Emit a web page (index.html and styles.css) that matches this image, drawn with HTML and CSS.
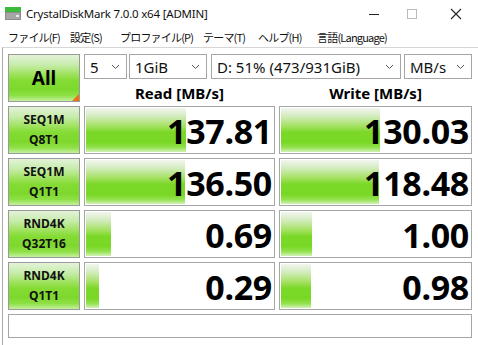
FILE: index.html
```html
<!DOCTYPE html>
<html lang="ja">
<head>
<meta charset="utf-8">
<title>CrystalDiskMark</title>
<link rel="stylesheet" href="styles.css">
</head>
<body>
<div class="titlebar">
  <svg class="appicon" width="16" height="14" viewBox="0 0 16 14">
    <rect x="0" y="0" width="16" height="5" fill="#3cba3c"/>
    <rect x="0" y="5" width="16" height="8" fill="#8c8c8c"/>
    <rect x="1" y="6" width="14" height="6" fill="#a6a6a6"/>
    <rect x="11" y="8" width="3" height="2" fill="#e8e8e8"/>
  </svg>
  <span class="title">CrystalDiskMark 7.0.0 x64 [ADMIN]</span>
  <div class="controls">
    <svg class="ctl" width="12" height="12" viewBox="0 0 12 12"><line x1="1" y1="6.5" x2="11" y2="6.5" stroke="#222" stroke-width="1"/></svg>
    <svg class="ctl" width="12" height="12" viewBox="0 0 12 12"><rect x="1.5" y="1.5" width="9" height="9" fill="none" stroke="#bbb" stroke-width="1"/></svg>
    <svg class="ctl" width="12" height="12" viewBox="0 0 12 12"><path d="M1 1 L11 11 M11 1 L1 11" stroke="#222" stroke-width="1.1"/></svg>
  </div>
</div>
<div class="menubar">
  <span class="mi m1">ファイル(F)</span>
  <span class="mi m2">設定(S)</span>
  <span class="mi m3">プロファイル(P)</span>
  <span class="mi m4">テーマ(T)</span>
  <span class="mi m5">ヘルプ(H)</span>
  <span class="mi m6">言語(Language)</span>
</div>
<div class="main">
  <div class="grid">
    <div class="btn all">All<span class="corner"></span></div>
    <div class="selects">
      <div class="sel s1"><span>5</span><svg width="9" height="6" viewBox="0 0 9 6"><path d="M1 1 L4.5 4.5 L8 1" fill="none" stroke="#555" stroke-width="1"/></svg></div>
      <div class="sel s2"><span>1GiB</span><svg width="9" height="6" viewBox="0 0 9 6"><path d="M1 1 L4.5 4.5 L8 1" fill="none" stroke="#555" stroke-width="1"/></svg></div>
      <div class="sel s3"><span>D: 51% (473/931GiB)</span><svg width="9" height="6" viewBox="0 0 9 6"><path d="M1 1 L4.5 4.5 L8 1" fill="none" stroke="#555" stroke-width="1"/></svg></div>
      <div class="sel s4"><span>MB/s</span><svg width="9" height="6" viewBox="0 0 9 6"><path d="M1 1 L4.5 4.5 L8 1" fill="none" stroke="#555" stroke-width="1"/></svg></div>
    </div>
    <div class="hdr">Read [MB/s]</div>
    <div class="hdr">Write [MB/s]</div>

    <div class="btn label">SEQ1M<br>Q8T1</div>
    <div class="cell"><div class="bar" style="width:100px"></div><span class="val">137.81</span></div>
    <div class="cell"><div class="bar" style="width:99px"></div><span class="val">130.03</span></div>

    <div class="btn label">SEQ1M<br>Q1T1</div>
    <div class="cell"><div class="bar" style="width:99px"></div><span class="val">136.50</span></div>
    <div class="cell"><div class="bar" style="width:98px"></div><span class="val">118.48</span></div>

    <div class="btn label">RND4K<br>Q32T16</div>
    <div class="cell"><div class="bar" style="width:25px"></div><span class="val">0.69</span></div>
    <div class="cell"><div class="bar" style="width:31px"></div><span class="val">1.00</span></div>

    <div class="btn label">RND4K<br>Q1T1</div>
    <div class="cell"><div class="bar" style="width:13px"></div><span class="val">0.29</span></div>
    <div class="cell"><div class="bar" style="width:30px"></div><span class="val">0.98</span></div>
  </div>
  <div class="status"></div>
</div>
</body>
</html>
```
FILE: styles.css
```css
* { box-sizing: border-box; }
html, body { margin: 0; padding: 0; background: #fff; }
body {
  width: 478px;
  height: 345px;
  overflow: hidden;
  font-family: "Noto Sans", "Noto Sans CJK JP", sans-serif;
  color: #000;
}
.titlebar {
  height: 27px;
  display: flex;
  align-items: center;
  padding-left: 5px;
}
.appicon { margin-right: 5px; margin-top: 1px; }
.title { font-size: 11.5px; letter-spacing: -0.2px; color: #111; }
.controls {
  margin-left: auto;
  display: flex;
  align-items: center;
}
.ctl { margin-right: 32px; }
.ctl:first-child { margin-right: 26px; }
.ctl:last-child { margin-right: 16px; }

.menubar {
  height: 20px;
  display: flex;
  align-items: center;
  font-family: "Noto Sans CJK JP", sans-serif;
  font-size: 11px;
  letter-spacing: -0.8px;
  color: #111;
  padding-left: 8px;
}
.mi { display: inline-block; }
.m1 { width: 62px; }
.m2 { width: 50px; }
.m3 { width: 83px; }
.m4 { width: 55px; }
.m5 { width: 59px; }

.main {
  margin-left: 2px;
  border-top: 1px solid #d6d6d6;
  border-left: 1px solid #a8a8a8;
  padding: 6px 6px 0 5px;
  height: 298px;
}
.grid {
  display: grid;
  grid-template-columns: 72px 191px 193px;
  grid-template-rows: 25px 19px 48px 48px 48px 48px;
  gap: 4px;
}
.btn {
  border: 1px solid #9a9a9a;
  background: linear-gradient(to bottom, #e3f2d8 0%, #c6ecaa 22%, #9fe25e 42%, #84dc34 55%, #7ed82c 75%, #8ee046 88%, #c4f0a0 100%);
  text-align: center;
  font-weight: bold;
  position: relative;
}
.all {
  grid-row: 1 / span 2;
  font-size: 19px;
  display: flex;
  align-items: center;
  justify-content: center;
}
.corner {
  position: absolute;
  right: 0;
  bottom: 0;
  width: 0;
  height: 0;
  border-style: solid;
  border-width: 0 0 7px 7px;
  border-color: transparent transparent #f07010 transparent;
}
.label {
  font-size: 12px;
  line-height: 20px;
  padding-top: 3px;
  color: #111;
}
.selects {
  grid-column: 2 / span 2;
  display: flex;
  gap: 2px;
}
.sel {
  border: 1px solid #a6a6a6;
  background: #fff;
  display: flex;
  align-items: center;
  justify-content: space-between;
  padding: 0 6px 0 5px;
  font-size: 15px;
  color: #111;
}
.s1 { width: 43px; }
.s2 { width: 78px; }
.s3 { width: 190px; margin-left: 2px; }
.s4 { width: 68px; margin-left: 1px; }
.hdr {
  font-weight: bold;
  font-size: 15px;
  text-align: center;
  line-height: 19px;
  margin-top: 1px;
}
.cell {
  position: relative;
  border: 1px solid #a6a6a6;
  background: #fff;
  display: flex;
  align-items: center;
  justify-content: flex-end;
  padding: 1px 2px 0 1px;
}
.bar {
  position: absolute;
  left: 1px;
  top: 1px;
  bottom: 1px;
  background: linear-gradient(to bottom, #f2f6ee 0%, #d4ecc0 18%, #a6e266 40%, #7cd828 55%, #78d824 78%, #94e250 90%, #d2f2b8 100%);
}
.val {
  position: relative;
  font-size: 34px;
  font-weight: bold;
  letter-spacing: -0.3px;
  line-height: 1;
}
.status {
  margin-top: 4px;
  height: 24px;
  width: 464px;
  border: 1px solid #a6a6a6;
  background: #fff;
}
```
